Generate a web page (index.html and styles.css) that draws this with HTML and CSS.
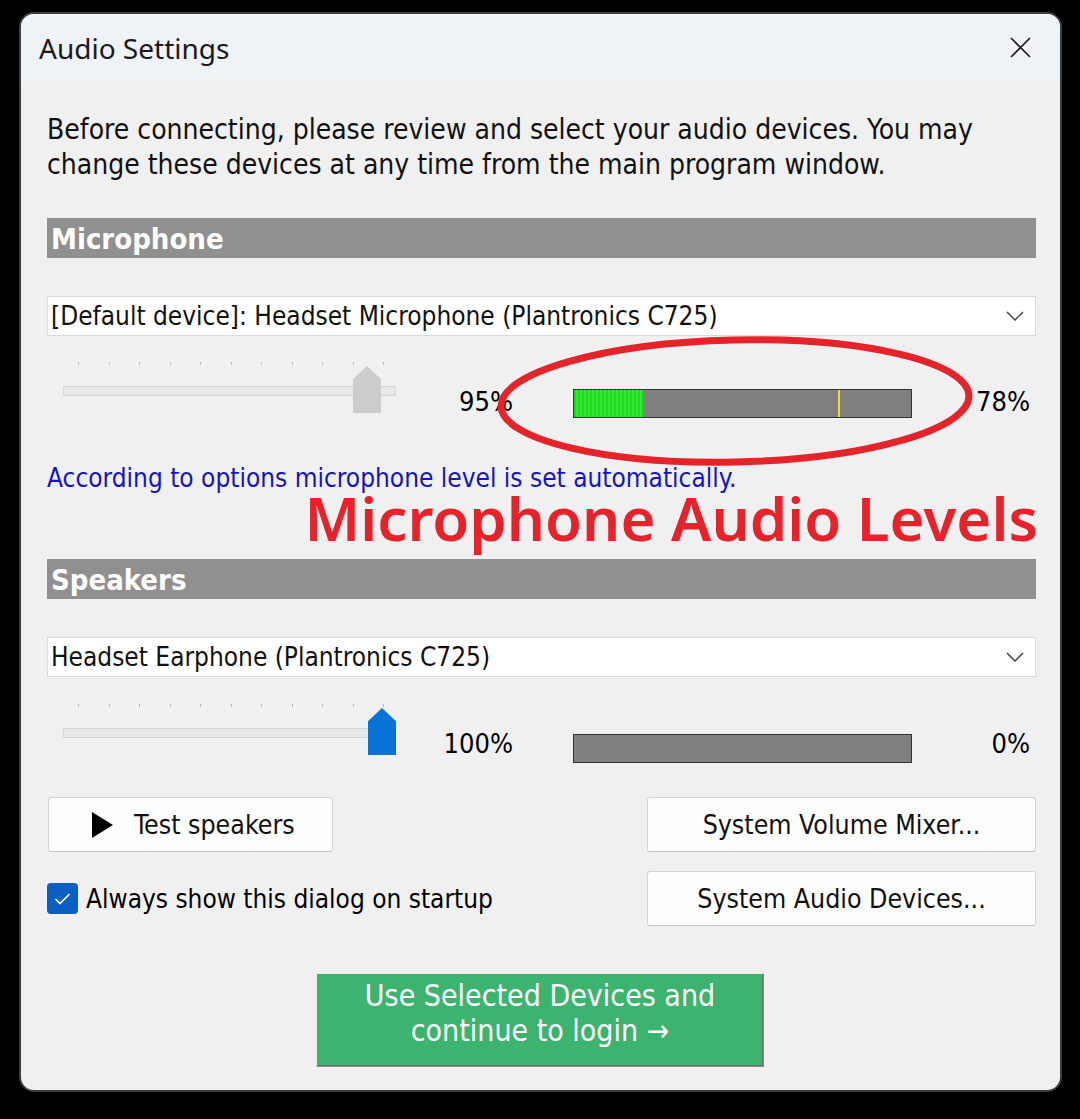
FILE: index.html
```html
<!DOCTYPE html>
<html>
<head>
<meta charset="utf-8">
<link rel="stylesheet" href="styles.css">
</head>
<body>
<div class="window">
  <div class="titlebar">
    <span class="title">Audio Settings</span>
    <svg class="close" width="21" height="21" viewBox="0 0 21 21"><path d="M1 1 L20 20 M20 1 L1 20" stroke="#1a1a1a" stroke-width="1.6" fill="none"/></svg>
  </div>
  <div class="content">
    <p class="intro">Before connecting, please review and select your audio devices. You may change these devices at any time from the main program window.</p>

    <div class="section-head">Microphone</div>
    <div class="select">
      <span>[Default device]: Headset Microphone (Plantronics C725)</span>
      <svg class="chev" width="18" height="10" viewBox="0 0 18 10"><path d="M1 1 L9 9 L17 1" stroke="#444" stroke-width="1.5" fill="none"/></svg>
    </div>
    <div class="level-row">
      <div class="slider">
        <div class="ticks"><i></i><i></i><i></i><i></i><i></i><i></i><i></i><i></i><i></i><i></i><i></i></div>
        <div class="track"></div>
        <div class="thumb thumb-off" style="left:306px"></div>
      </div>
      <div class="vol">95%</div>
      <div class="meter">
        <div class="meter-fill" style="width:69px"></div>
        <div class="peak" style="left:264px"></div>
      </div>
      <div class="lvl">78%</div>
    </div>
    <p class="note">According to options microphone level is set automatically.</p>
    <div class="annotation">Microphone Audio Levels</div>

    <div class="section-head">Speakers</div>
    <div class="select">
      <span>Headset Earphone (Plantronics C725)</span>
      <svg class="chev" width="18" height="10" viewBox="0 0 18 10"><path d="M1 1 L9 9 L17 1" stroke="#444" stroke-width="1.5" fill="none"/></svg>
    </div>
    <div class="level-row row2">
      <div class="slider">
        <div class="ticks"><i></i><i></i><i></i><i></i><i></i><i></i><i></i><i></i><i></i><i></i><i></i></div>
        <div class="track"></div>
        <div class="thumb thumb-on" style="left:321px"></div>
      </div>
      <div class="vol">100%</div>
      <div class="meter"></div>
      <div class="lvl">0%</div>
    </div>

    <div class="actions">
      <div class="btn btn-test">
        <svg width="22" height="26" viewBox="0 0 22 26"><path d="M0 0 L21 13 L0 26 Z" fill="#000"/></svg>
        <span>Test speakers</span>
      </div>
      <div class="btn btn-wide">System Volume Mixer...</div>
      <label class="check">
        <span class="box"><svg width="31" height="31" viewBox="0 0 31 31"><path d="M8.5 16 L13 20.5 L22.5 11" stroke="#fff" stroke-width="1.6" fill="none"/></svg></span>
        <span>Always show this dialog on startup</span>
      </label>
      <div class="btn btn-wide">System Audio Devices...</div>
    </div>

    <div class="go">Use Selected Devices and<br>continue to login &#8594;</div>
  </div>

  <svg class="ring" width="500" height="150" viewBox="0 0 500 150">
    <ellipse cx="244" cy="72" rx="234" ry="61" transform="rotate(-1.3 244 72)" fill="none" stroke="#e5232a" stroke-width="7"/>
  </svg>
</div>
</body>
</html>
```
FILE: styles.css
```css
* { box-sizing: border-box; }
html, body { margin: 0; padding: 0; }
body {
  background: #000;
  width: 1080px;
  height: 1119px;
  overflow: hidden;
  font-family: "DejaVu Sans Condensed", "DejaVu Sans", sans-serif;
  font-stretch: condensed;
  font-size: 26px;
  color: #000;
}
.window {
  position: relative;
  margin: 12px 0 0 19px;
  width: 1043px;
  height: 1080px;
  border: 2px solid #3e3e3e;
  border-radius: 15px;
  overflow: hidden;
  background: #f0f0f0;
}
.titlebar {
  height: 68px;
  background: #eff3f8;
  display: flex;
  align-items: center;
  justify-content: space-between;
  padding: 0 29px 0 18px;
}
.title {
  font-family: "Noto Sans", sans-serif;
  font-stretch: normal;
  font-size: 28px;
  color: #1a1a1a;
}
.close { display: block; margin-top: -2px; }
.content {
  padding: 30px 24px 0 26px;
}
.intro {
  margin: 0;
  font-size: 28px;
  line-height: 35px;
  color: #111;
}
.section-head {
  margin-top: 36px;
  height: 40px;
  background: #909090;
  color: #fff;
  font-weight: bold;
  font-size: 29px;
  line-height: 42px;
  padding-left: 4px;
}
.select {
  margin-top: 38px;
  height: 40px;
  background: #fff;
  border: 1px solid #dadada;
  display: flex;
  align-items: center;
  justify-content: space-between;
  padding: 0 11px 0 3px;
  color: #111;
}
.chev { display: block; }
.level-row {
  margin-top: 14px;
  height: 70px;
  display: flex;
  align-items: flex-start;
}
.level-row.row2 { margin-top: 15px; }
.slider {
  position: relative;
  width: 350px;
  height: 70px;
  flex: none;
}
.ticks {
  margin: 12px 0 0 31px;
  width: 306px;
  height: 3px;
  display: flex;
  justify-content: space-between;
}
.ticks i {
  display: block;
  width: 1px;
  height: 3px;
  background: #b8b8b8;
}
.track {
  margin: 21px 0 0 16px;
  width: 333px;
  height: 10px;
  background: #e8e8e8;
  border: 1px solid #d6d6d6;
}
.thumb {
  position: absolute;
  top: 16px;
  width: 28px;
  height: 47px;
  clip-path: polygon(50% 0, 100% 28%, 100% 100%, 0 100%, 0 28%);
}
.thumb-off { background: #cccccc; }
.thumb-on { background: #0a72d4; }
.vol {
  width: 116px;
  flex: none;
  text-align: right;
  margin-top: 38px;
  line-height: 28px;
  font-size: 27px;
}
.meter {
  position: relative;
  flex: none;
  margin: 39px 0 0 60px;
  width: 339px;
  height: 29px;
  border: 1px solid #333;
  background: #808080;
  display: flex;
}
.row2 .meter { margin-top: 42px; }
.meter-fill {
  height: 100%;
  background: repeating-linear-gradient(90deg, #20d820 0, #20d820 2px, #35e835 2px, #35e835 4px);
}
.peak {
  position: absolute;
  top: 0;
  width: 2px;
  height: 100%;
  background: #e4e42c;
}
.lvl {
  flex: 1;
  text-align: right;
  padding-right: 6px;
  margin-top: 38px;
  line-height: 28px;
  font-size: 27px;
}
.note {
  margin: 44px 0 0;
  line-height: 28px;
  color: #1414c0;
}
.annotation {
  height: 67px;
  margin-right: -2px;
  text-align: right;
  font-family: "Noto Sans", sans-serif;
  font-stretch: normal;
  font-weight: 600;
  font-size: 60px;
  line-height: 52px;
  color: #e8222b;
}
.annotation + .section-head { margin-top: 0; }
.actions {
  margin-top: 35px;
  display: grid;
  grid-template-columns: 1fr 389px;
  row-gap: 19px;
}
.btn {
  height: 55px;
  background: #fdfdfd;
  border: 1px solid #d3d3d3;
  border-bottom-color: #c4c4c4;
  border-radius: 3px;
  display: flex;
  align-items: center;
  justify-content: center;
  color: #111;
  font-size: 26.5px;
}
.btn-test {
  width: 285px;
  margin-left: 1px;
  justify-content: flex-start;
  padding-left: 43px;
}
.btn-test svg { display: block; margin-right: 20px; }
.check {
  display: flex;
  align-items: center;
  gap: 8px;
}
.box {
  width: 31px;
  height: 31px;
  border-radius: 4px;
  background: #0b5fc2;
  display: block;
}
.box svg { display: block; }
.go {
  margin: 47px 0 0 269px;
  width: 448px;
  height: 94px;
  background: #3db370;
  border: 1px solid #8a8a8a;
  border-top-color: #e8f0ea;
  border-left-color: #e8f0ea;
  box-shadow: inset -1px -1px 0 #6f6f6f;
  color: #fff;
  font-size: 30px;
  line-height: 35px;
  text-align: center;
  padding-top: 4px;
}
.ring {
  position: absolute;
  left: 470px;
  top: 315px;
}
```
